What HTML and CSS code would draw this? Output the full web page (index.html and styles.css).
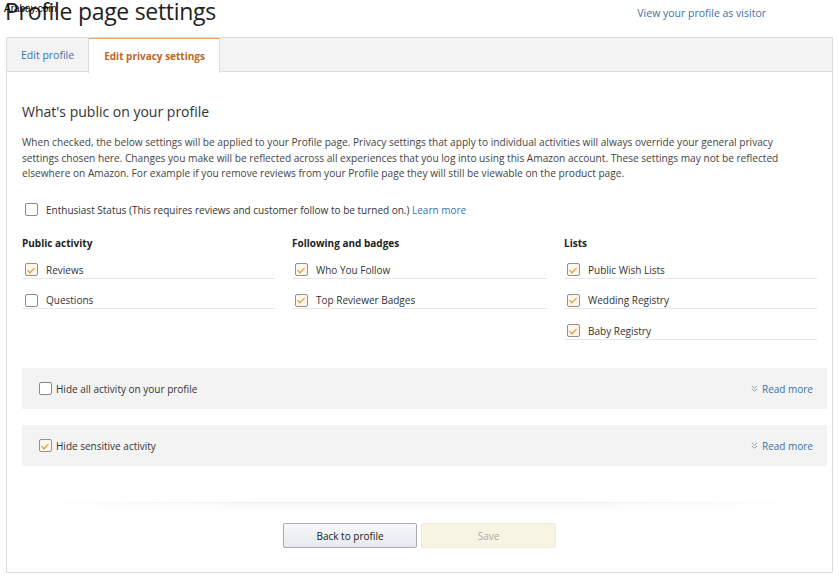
FILE: index.html
```html
<!DOCTYPE html>
<html>
<head>
<meta charset="utf-8">
<link rel="stylesheet" href="styles.css">
</head>
<body>
<div class="watermark">Arabay.com</div>
<header class="top">
  <h1 class="title">Profile page settings</h1>
  <a class="visitor-link" href="#">View your profile as visitor</a>
</header>
<main class="panel">
  <nav class="tabs">
    <a class="tab" href="#">Edit profile</a>
    <a class="tab tab-active" href="#">Edit privacy settings</a>
  </nav>
  <section class="content">
    <h2 class="section-title">What's public on your profile</h2>
    <p class="intro">When checked, the below settings will be applied to your Profile page. Privacy settings that apply to individual activities will always override your general privacy settings chosen here. Changes you make will be reflected across all experiences that you log into using this Amazon account. These settings may not be reflected elsewhere on Amazon. For example if you remove reviews from your Profile page they will still be viewable on the product page.</p>
    <div class="check-line enthusiast">
      <span class="box"></span>
      <span>Enthusiast Status (This requires reviews and customer follow to be turned on.) <a class="link" href="#">Learn more</a></span>
    </div>
    <div class="columns">
      <div class="col">
        <h3 class="col-title">Public activity</h3>
        <div class="row"><span class="box checked"></span><span>Reviews</span></div>
        <div class="row"><span class="box"></span><span>Questions</span></div>
      </div>
      <div class="col">
        <h3 class="col-title">Following and badges</h3>
        <div class="row"><span class="box checked"></span><span>Who You Follow</span></div>
        <div class="row"><span class="box checked"></span><span>Top Reviewer Badges</span></div>
      </div>
      <div class="col col-last">
        <h3 class="col-title">Lists</h3>
        <div class="row"><span class="box checked"></span><span>Public Wish Lists</span></div>
        <div class="row"><span class="box checked"></span><span>Wedding Registry</span></div>
        <div class="row"><span class="box checked"></span><span>Baby Registry</span></div>
      </div>
    </div>
    <div class="option-box">
      <div class="option-label"><span class="box"></span><span>Hide all activity on your profile</span></div>
      <a class="read-more" href="#"><svg class="chev" viewBox="0 0 8 8" width="7" height="7"><path d="M1 1 L4 3.5 L7 1 M1 4.5 L4 7 L7 4.5" fill="none" stroke="#999" stroke-width="1.1"/></svg>Read more</a>
    </div>
    <div class="option-box">
      <div class="option-label"><span class="box checked"></span><span>Hide sensitive activity</span></div>
      <a class="read-more" href="#"><svg class="chev" viewBox="0 0 8 8" width="7" height="7"><path d="M1 1 L4 3.5 L7 1 M1 4.5 L4 7 L7 4.5" fill="none" stroke="#999" stroke-width="1.1"/></svg>Read more</a>
    </div>
  </section>
  <div class="divider"></div>
  <div class="actions">
    <button class="btn btn-back">Back to profile</button>
    <button class="btn btn-save" disabled>Save</button>
  </div>
</main>
</body>
</html>
```
FILE: styles.css
```css
* { box-sizing: border-box; }
html, body { margin: 0; padding: 0; background: #fff; }
body {
  font-family: "Open Sans", "Noto Sans", sans-serif;
  color: #333;
  font-size: 10px;
  width: 839px;
  height: 579px;
  overflow: hidden;
  position: relative;
}
a { text-decoration: none; }
.watermark {
  position: absolute;
  left: 4px;
  top: 3px;
  font-family: "Liberation Sans", sans-serif;
  font-size: 10px;
  line-height: 12px;
  color: #000;
  z-index: 5;
}
.top {
  display: flex;
  justify-content: space-between;
  align-items: flex-start;
  height: 37px;
}
.title {
  margin: -3px 0 0 5px;
  font-weight: 400;
  font-size: 23px;
  line-height: 28px;
  color: #222;
  letter-spacing: -0.3px;
}
.visitor-link {
  margin: 6px 73px 0 0;
  font-size: 10.5px;
  line-height: 14px;
  color: #3a72a8;
}
.panel {
  margin: 0 6px;
  height: 536px;
  border: 1px solid #ddd;
  border-radius: 1px;
  display: flex;
  flex-direction: column;
}
.tabs {
  display: flex;
  height: 34px;
  background: #f3f3f3;
  border-bottom: 1px solid #ddd;
}
.tab {
  display: flex;
  align-items: center;
  padding: 0 14px 0 14px;
  font-size: 10.5px;
  color: #3a72a8;
}
.tab-active {
  background: #fff;
  color: #c0661f;
  font-weight: 700;
  font-size: 10px;
  padding: 0 14px 0 15px;
  border-top: 1px solid #e8a465;
  border-left: 1px solid #ddd;
  border-right: 1px solid #ddd;
  margin-bottom: -1px;
  height: 35px;
}
.content {
  padding: 31px 5px 0 15px;
}
.section-title {
  margin: 0;
  font-weight: 400;
  font-size: 14px;
  line-height: 18px;
  color: #333;
}
.intro {
  margin: 14px 0 0 0;
  max-width: 790px;
  font-size: 10.15px;
  line-height: 15.5px;
  color: #444;
}
.check-line {
  display: flex;
  align-items: center;
  gap: 8px;
  line-height: 16px;
  padding-left: 3px;
}
.enthusiast { margin-top: 20px; }
.link { color: #3a72a8; }
.box {
  flex: none;
  width: 13px;
  height: 13px;
  border: 1px solid #8a8a8a;
  border-radius: 2px;
  background: #fff;
  position: relative;
}
.box.checked {
  background: #fdf6ec;
  border-color: #9a8f80;
}
.box.checked::after {
  content: "";
  position: absolute;
  left: 3px;
  top: 1.5px;
  width: 3px;
  height: 6px;
  border-right: 1.6px solid #e08a2c;
  border-bottom: 1.6px solid #e08a2c;
  transform: rotate(45deg);
}
.columns {
  display: grid;
  grid-template-columns: 270px 272px 1fr;
  margin-top: 17px;
}
.col { padding-right: 17px; }
.col-last { padding-right: 10px; }
.col-title {
  margin: 0 0 11px 0;
  font-size: 10px;
  font-weight: 700;
  line-height: 16px;
  color: #222;
}
.row {
  display: flex;
  align-items: center;
  gap: 8px;
  padding-left: 3px;
  height: 17px;
  border-bottom: 1px solid #e7e7e7;
  margin-bottom: 13.5px;
}
.option-box {
  display: flex;
  justify-content: space-between;
  align-items: center;
  height: 41px;
  background: #f3f3f3;
  padding: 0 14px 0 17px;
  margin-bottom: 16px;
}
.columns + .option-box { margin-top: 15px; }
.option-label {
  display: flex;
  align-items: center;
  gap: 4px;
}
.read-more {
  display: flex;
  align-items: center;
  gap: 4px;
  color: #3a72a8;
  font-size: 10px;
}
.divider {
  margin: 20px 30px 0 30px;
  height: 10px;
  background:
    linear-gradient(to right, rgba(255,255,255,1), rgba(255,255,255,0) 30%, rgba(255,255,255,0) 70%, rgba(255,255,255,1)),
    linear-gradient(to bottom, #e9e9e9 0, #f6f6f6 1px, #fbfbfb 4px, #fff 10px);
}
.actions {
  display: flex;
  justify-content: center;
  gap: 4px;
  margin-top: 11px;
}
.btn {
  width: 134px;
  height: 25px;
  font-family: "Open Sans", "Noto Sans", sans-serif;
  font-size: 10px;
  border-radius: 2px;
  padding: 0;
}
.btn-back {
  background: linear-gradient(to bottom, #f7f8fa, #e7e9ec);
  border: 1px solid #a8abb0;
  color: #222;
}
.btn-save {
  width: 135px;
  background: #f8f4e3;
  border: 1px solid #f1ecd8;
  color: #aaa;
}
```
